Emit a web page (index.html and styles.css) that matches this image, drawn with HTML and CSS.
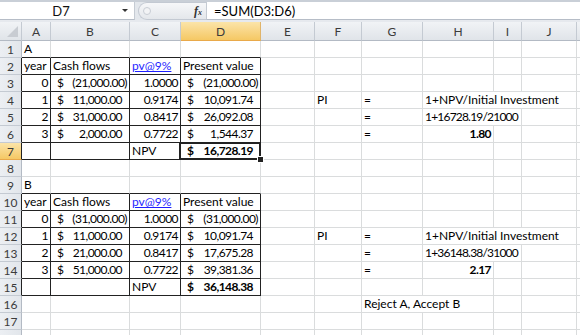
FILE: index.html
```html
<!DOCTYPE html>
<html>
<head>
<meta charset="utf-8">
<link rel="stylesheet" href="styles.css">
</head>
<body>
<div class="top">
  <div class="namebox"><span class="nb-text">D7</span><span class="nb-arrow"></span></div>
  <div class="pill"><span class="dot"></span><span class="fx">f<sub>x</sub></span></div>
  <div class="formula">=SUM(D3:D6)</div>
</div>
<div class="sheet">
  <div class="ch corner"></div><div class="ch">A</div><div class="ch">B</div><div class="ch">C</div><div class="ch selh">D</div><div class="ch">E</div><div class="ch">F</div><div class="ch">G</div><div class="ch">H</div><div class="ch">I</div><div class="ch">J</div><div class="ch"></div>

  <div class="rh">1</div><div class="c bb">A</div><div class="c bb"></div><div class="c bb"></div><div class="c bb"></div><div class="c"></div><div class="c"></div><div class="c"></div><div class="c"></div><div class="c"></div><div class="c"></div><div class="c"></div>

  <div class="rh kr">2</div><div class="c bk">year</div><div class="c bk">Cash flows</div><div class="c bk"><span class="link">pv@9%</span></div><div class="c bk">Present value</div><div class="c"></div><div class="c"></div><div class="c"></div><div class="c"></div><div class="c"></div><div class="c"></div><div class="c"></div>

  <div class="rh kr">3</div><div class="c bk r n">0</div><div class="c bk acc neg n"><span>$</span><span>(21,000.00)</span></div><div class="c bk r n">1.0000</div><div class="c bk acc neg n"><span>$</span><span>(21,000.00)</span></div><div class="c"></div><div class="c"></div><div class="c"></div><div class="c"></div><div class="c"></div><div class="c"></div><div class="c"></div>

  <div class="rh kr">4</div><div class="c bk r n">1</div><div class="c bk acc n"><span>$</span><span>11,000.00</span></div><div class="c bk r n">0.9174</div><div class="c bk acc n"><span>$</span><span>10,091.74</span></div><div class="c"></div><div class="c">PI</div><div class="c">=</div><div class="c span3">1+NPV/Initial Investment</div><div class="c"></div>

  <div class="rh kr">5</div><div class="c bk r n">2</div><div class="c bk acc n"><span>$</span><span>31,000.00</span></div><div class="c bk r n">0.8417</div><div class="c bk acc n"><span>$</span><span>26,092.08</span></div><div class="c"></div><div class="c"></div><div class="c">=</div><div class="c span2 n2">1+16728.19/21000</div><div class="c"></div><div class="c"></div>

  <div class="rh kr">6</div><div class="c bk r n">3</div><div class="c bk acc n"><span>$</span><span>2,000.00</span></div><div class="c bk r n">0.7722</div><div class="c bk acc n"><span>$</span><span>1,544.37</span></div><div class="c"></div><div class="c"></div><div class="c">=</div><div class="c r b n">1.80</div><div class="c"></div><div class="c"></div><div class="c"></div>

  <div class="rh kr selh">7</div><div class="c bk"></div><div class="c bk"></div><div class="c bk">NPV</div><div class="c bk acc b n sel"><span>$</span><span>16,728.19</span></div><div class="c"></div><div class="c"></div><div class="c"></div><div class="c"></div><div class="c"></div><div class="c"></div><div class="c"></div>

  <div class="rh">8</div><div class="c"></div><div class="c"></div><div class="c"></div><div class="c"></div><div class="c"></div><div class="c"></div><div class="c"></div><div class="c"></div><div class="c"></div><div class="c"></div><div class="c"></div>

  <div class="rh">9</div><div class="c bb">B</div><div class="c bb"></div><div class="c bb"></div><div class="c bb"></div><div class="c"></div><div class="c"></div><div class="c"></div><div class="c"></div><div class="c"></div><div class="c"></div><div class="c"></div>

  <div class="rh kr">10</div><div class="c bk">year</div><div class="c bk">Cash flows</div><div class="c bk"><span class="link">pv@9%</span></div><div class="c bk">Present value</div><div class="c"></div><div class="c"></div><div class="c"></div><div class="c"></div><div class="c"></div><div class="c"></div><div class="c"></div>

  <div class="rh kr">11</div><div class="c bk r n">0</div><div class="c bk acc neg n"><span>$</span><span>(31,000.00)</span></div><div class="c bk r n">1.0000</div><div class="c bk acc neg n"><span>$</span><span>(31,000.00)</span></div><div class="c"></div><div class="c"></div><div class="c"></div><div class="c"></div><div class="c"></div><div class="c"></div><div class="c"></div>

  <div class="rh kr">12</div><div class="c bk r n">1</div><div class="c bk acc n"><span>$</span><span>11,000.00</span></div><div class="c bk r n">0.9174</div><div class="c bk acc n"><span>$</span><span>10,091.74</span></div><div class="c"></div><div class="c">PI</div><div class="c">=</div><div class="c span3">1+NPV/Initial Investment</div><div class="c"></div>

  <div class="rh kr">13</div><div class="c bk r n">2</div><div class="c bk acc n"><span>$</span><span>21,000.00</span></div><div class="c bk r n">0.8417</div><div class="c bk acc n"><span>$</span><span>17,675.28</span></div><div class="c"></div><div class="c"></div><div class="c">=</div><div class="c span2 n2">1+36148.38/31000</div><div class="c"></div><div class="c"></div>

  <div class="rh kr">14</div><div class="c bk r n">3</div><div class="c bk acc n"><span>$</span><span>51,000.00</span></div><div class="c bk r n">0.7722</div><div class="c bk acc n"><span>$</span><span>39,381.36</span></div><div class="c"></div><div class="c"></div><div class="c">=</div><div class="c r b n">2.17</div><div class="c"></div><div class="c"></div><div class="c"></div>

  <div class="rh kr">15</div><div class="c bk"></div><div class="c bk"></div><div class="c bk">NPV</div><div class="c bk acc b n"><span>$</span><span>36,148.38</span></div><div class="c"></div><div class="c"></div><div class="c"></div><div class="c"></div><div class="c"></div><div class="c"></div><div class="c"></div>

  <div class="rh">16</div><div class="c"></div><div class="c"></div><div class="c"></div><div class="c"></div><div class="c"></div><div class="c"></div><div class="c span2">Reject A, Accept B</div><div class="c"></div><div class="c"></div><div class="c"></div>

  <div class="rh">17</div><div class="c"></div><div class="c"></div><div class="c"></div><div class="c"></div><div class="c"></div><div class="c"></div><div class="c"></div><div class="c"></div><div class="c"></div><div class="c"></div><div class="c"></div>

  <div class="rh"></div><div class="c"></div><div class="c"></div><div class="c"></div><div class="c"></div><div class="c"></div><div class="c"></div><div class="c"></div><div class="c"></div><div class="c"></div><div class="c"></div><div class="c"></div>
</div>
</body>
</html>
```
FILE: styles.css
```css
html, body {
  margin: 0;
  padding: 0;
}
body {
  width: 580px;
  height: 335px;
  overflow: hidden;
  background: #fff;
  font-family: Lato, "Liberation Sans", sans-serif;
  font-size: 12px;
  color: #000;
}
.top {
  height: 22px;
  box-sizing: border-box;
  display: flex;
  background: #e3e7ec;
  border-top: 2px solid #c9cfd7;
  border-bottom: 2px solid #e6e9ee;
}
.namebox {
  width: 134px;
  background: #fff;
  border-right: 1px solid #c5cbd3;
  border-bottom: 1px solid #b6bdc7;
  display: flex;
  align-items: center;
}
.nb-text {
  width: 122px;
  text-align: center;
  font-size: 13px;
  color: #111;
}
.nb-arrow {
  width: 0;
  height: 0;
  border-left: 3px solid transparent;
  border-right: 3px solid transparent;
  border-top: 3px solid #333;
}
.pill {
  width: 68px;
  margin-left: 3px;
  border: 1px solid #c3c9d2;
  border-right: none;
  border-radius: 9px 0 0 9px;
  background: linear-gradient(#f6f7f9, #e4e7eb);
  display: flex;
  align-items: center;
  justify-content: space-between;
  padding: 0 4px;
  box-sizing: border-box;
}
.dot {
  width: 6px;
  height: 6px;
  border: 1px solid #c8cdd4;
  border-radius: 50%;
  background: #f2f3f5;
}
.fx {
  font-family: "Liberation Serif", serif;
  font-style: italic;
  font-weight: bold;
  font-size: 12px;
  color: #333;
}
.fx sub {
  font-size: 8px;
  vertical-align: baseline;
}
.formula {
  flex: 1;
  background: #fff;
  border-left: 1px solid #c5cbd3;
  border-bottom: 1px solid #b6bdc7;
  padding-left: 7px;
  display: flex;
  align-items: center;
  font-size: 13px;
}
.sheet {
  display: grid;
  grid-template-columns: 22px 29px 79px 51px 80px 54px 47px 61px 71px 28px 55px 1fr;
  grid-template-rows: 19px repeat(18, 17px);
}
.ch {
  background: linear-gradient(#f1f3f6, #e0e4e9);
  border-right: 1px solid #c4cad2;
  border-bottom: 1px solid #b3bac4;
  box-sizing: border-box;
  display: flex;
  align-items: center;
  justify-content: center;
  font-size: 12px;
  color: #3b3b3b;
}
.corner {
  position: relative;
}
.corner::after {
  content: "";
  position: absolute;
  right: 3px;
  bottom: 3px;
  border-left: 11px solid transparent;
  border-bottom: 11px solid #c8ccd2;
}
.rh {
  background: linear-gradient(90deg, #eceff3, #e2e6eb);
  border-right: 1px solid #b3bac4;
  border-bottom: 1px solid #c4cad2;
  box-sizing: border-box;
  display: flex;
  align-items: center;
  justify-content: center;
  font-size: 12px;
  color: #3b3b3b;
}
.rh.kr {
  border-right-color: #222;
}
.selh {
  background: linear-gradient(#fbe4a9, #f5c864);
  border-bottom-color: #e9a94a;
  border-right-color: #e0b46a;
}
.rh.selh {
  border-right-color: #222;
}
.c {
  box-sizing: border-box;
  border-right: 1px solid #dadcdd;
  border-bottom: 1px solid #dadcdd;
  padding: 0 2px 1px 2px;
  display: flex;
  align-items: flex-end;
  white-space: nowrap;
  overflow: hidden;
  line-height: 15px;
}
.c.bk {
  border-right-color: #222;
  border-bottom-color: #222;
}
.c.bb {
  border-bottom-color: #222;
}
.n {
  letter-spacing: -0.55px;
}
.n2 {
  letter-spacing: -0.8px;
}
.r {
  justify-content: flex-end;
}
.acc {
  justify-content: space-between;
  padding-left: 6px;
  padding-right: 7px;
}
.acc.neg {
  padding-right: 2px;
}
.b {
  font-weight: bold;
}
.link {
  color: #1f1fff;
  text-decoration: underline;
}
.span2 {
  grid-column: span 2;
}
.span3 {
  grid-column: span 3;
}
.sel {
  position: relative;
  overflow: visible;
}
.sel::after {
  content: "";
  position: absolute;
  left: -2px;
  top: -1px;
  right: -1px;
  bottom: -1px;
  border: 2px solid #222;
}
.sel::before {
  content: "";
  position: absolute;
  right: -4px;
  bottom: -4px;
  width: 5px;
  height: 5px;
  background: #222;
  border: 1px solid #fff;
  z-index: 2;
}
```
